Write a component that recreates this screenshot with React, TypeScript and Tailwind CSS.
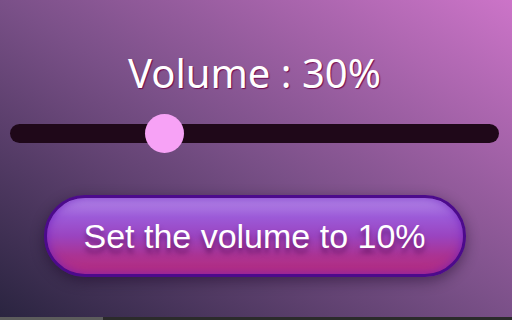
import { useState } from 'react';

export default function App() {
  const [volume, setVolume] = useState(30);

  return (
    <div className="flex h-[320px] w-[512px] flex-col overflow-hidden">
      <main className="flex flex-1 flex-col items-center bg-[linear-gradient(to_top_right,#2a2440_0%,#7a5088_50%,#cc74c8_100%)] pl-[10px] pr-[13px] pt-[46px] font-['Noto_Sans',sans-serif]">
        <h1 className="text-[40px] leading-[54px] text-white [text-shadow:1px_1px_1px_rgba(110,0,70,0.9)]">
          Volume : {volume}%
        </h1>

        {/* slider */}
        <div className="relative mt-[14px] h-[39px] w-full">
          <div className="absolute top-[10px] h-[19px] w-full rounded-full bg-[#1f0819]" />
          <div
            className="absolute top-0 h-[39px] w-[39px] rounded-full bg-[#f7a2f6]"
            style={{ left: `calc((100% - 39px) * ${volume / 100})` }}
          />
        </div>

        <button
          onClick={() => setVolume(10)}
          className="mt-[42px] h-[82px] w-[422px] rounded-full border-[3px] border-[#4c0a8c] bg-[linear-gradient(to_bottom,#b48ae8_0%,#9c5ad8_25%,#9a44c0_50%,#aa3394_75%,#b72c7c_100%)] font-['Liberation_Sans',Arial,sans-serif] text-[34px] text-white shadow-[0_4px_14px_rgba(20,0,30,0.45),inset_0_0_10px_rgba(110,30,190,0.8)] [text-shadow:0_5px_5px_rgba(70,0,70,0.55)]"
        >
          Set the volume to 10%
        </button>
      </main>
      <div className="flex h-[3px] bg-[#2b2b2b]">
        <div className="w-[103px] bg-[#5c5c5c]" />
      </div>
    </div>
  );
}
